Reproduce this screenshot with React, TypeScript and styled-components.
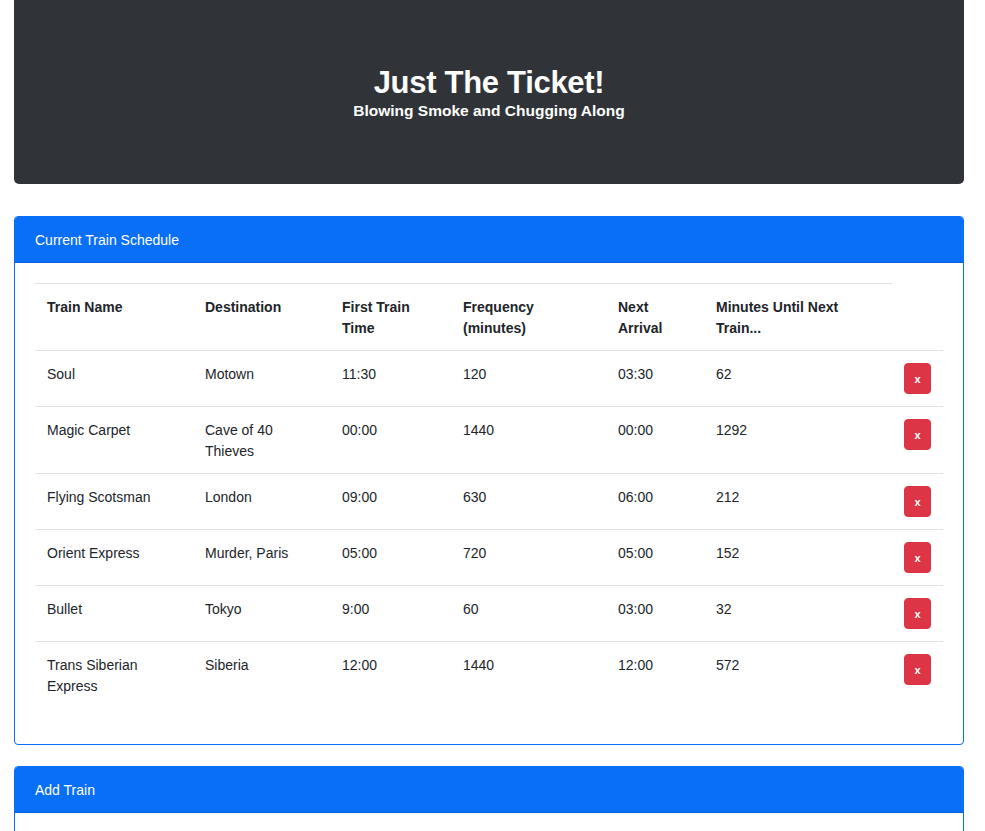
import styled, {createGlobalStyle} from "styled-components";

const GlobalStyle = createGlobalStyle`
  body {
    margin: 0;
    background: #ffffff;
    font-family: "Liberation Sans", Arial, sans-serif;
    font-size: 14px;
    line-height: 1.5;
    color: #212529;
  }
`;

const Page = styled.div`
  padding: 0 21px 40px 14px;
`;

const Jumbotron = styled.header`
  height: 184px;
  background-color: #303438;
  border-radius: 0 0 5px 5px;
  color: #ffffff;
  display: flex;
  flex-direction: column;
  justify-content: center;
  align-items: center;
`;

const Title = styled.h1`
  margin: 0;
  font-size: 31px;
  font-weight: 700;
  line-height: 37px;
  letter-spacing: -0.3px;
`;

const Subtitle = styled.h5`
  margin: 0;
  font-size: 15.5px;
  font-weight: 700;
  line-height: 19px;
`;

const Card = styled.section<{ $gap: number }>`
  margin-top: ${(p) => p.$gap}px;
  border: 1px solid #0a6ff7;
  border-radius: 4px;
  overflow: hidden;
`;

const CardHeader = styled.div`
  background-color: #0a6ff7;
  color: #ffffff;
  padding: 13px 20px 11px;
  line-height: 21px;
  border-bottom: 1px solid rgba(0, 0, 0, 0.125);
`;

const CardBody = styled.div`
  padding: 20px;
`;

const Table = styled.table`
  width: 100%;
  border-collapse: collapse;
  table-layout: fixed;
  margin-bottom: 16px;
`;

const Col = styled.col<{ $w: number }>`
  width: ${(p) => p.$w}px;
`;

const Th = styled.th`
  text-align: left;
  vertical-align: top;
  padding: 13px 12px 11px;
  font-weight: 700;
  line-height: 21px;
  border-top: 1px solid #dee2e6;
`;

const Td = styled.td`
  vertical-align: top;
  padding: 13px 12px 11px;
  line-height: 21px;
  border-top: 1px solid #dee2e6;
`;

const ActionTd = styled(Td)`
  padding: 12px;
`;

const DeleteButton = styled.button`
  width: 27px;
  height: 31px;
  padding: 1px 0 0;
  border: 1px solid #dc3545;
  border-radius: 4px;
  background-color: #dc3545;
  color: #ffffff;
  font-family: "Liberation Sans", Arial, sans-serif;
  font-size: 11px;
  font-weight: 700;
  line-height: 1;
  cursor: pointer;
`;

const Form = styled.form`
  display: flex;
  flex-direction: column;
  gap: 16px;
  padding-top: 4px;
`;

const Input = styled.input`
  height: 38px;
  padding: 6px 12px;
  border: 1px solid #ced4da;
  border-radius: 4px;
  font-size: 14px;
`;

const trains = [
    {name: "Soul", dest: "Motown", first: "11:30", freq: 120, next: "03:30", mins: 62},
    {name: "Magic Carpet", dest: "Cave of 40 Thieves", first: "00:00", freq: 1440, next: "00:00", mins: 1292},
    {name: "Flying Scotsman", dest: "London", first: "09:00", freq: 630, next: "06:00", mins: 212},
    {name: "Orient Express", dest: "Murder, Paris", first: "05:00", freq: 720, next: "05:00", mins: 152},
    {name: "Bullet", dest: "Tokyo", first: "9:00", freq: 60, next: "03:00", mins: 32},
    {name: "Trans Siberian Express", dest: "Siberia", first: "12:00", freq: 1440, next: "12:00", mins: 572},
];

const widths = [158, 137, 121, 155, 98, 188, 51];

function App() {
    return (
        <Page>
            <GlobalStyle/>
            <Jumbotron>
                <Title>Just The Ticket!</Title>
                <Subtitle>Blowing Smoke and Chugging Along</Subtitle>
            </Jumbotron>

            <Card $gap={32}>
                <CardHeader>Current Train Schedule</CardHeader>
                <CardBody>
                    <Table>
                        <colgroup>
                            {widths.map((w, i) => <Col key={i} $w={w}/>)}
                        </colgroup>
                        <thead>
                        <tr>
                            <Th>Train Name</Th>
                            <Th>Destination</Th>
                            <Th>First Train Time</Th>
                            <Th>Frequency (minutes)</Th>
                            <Th>Next Arrival</Th>
                            <Th>Minutes Until Next Train...</Th>
                        </tr>
                        </thead>
                        <tbody>
                        {trains.map((t) => (
                            <tr key={t.name}>
                                <Td>{t.name}</Td>
                                <Td>{t.dest}</Td>
                                <Td>{t.first}</Td>
                                <Td>{t.freq}</Td>
                                <Td>{t.next}</Td>
                                <Td>{t.mins}</Td>
                                <ActionTd><DeleteButton>x</DeleteButton></ActionTd>
                            </tr>
                        ))}
                        </tbody>
                    </Table>
                </CardBody>
            </Card>

            <Card $gap={21}>
                <CardHeader>Add Train</CardHeader>
                <CardBody>
                    <Form>
                        <Input aria-label="Train Name"/>
                        <Input aria-label="Destination"/>
                        <Input aria-label="First Train Time"/>
                        <Input aria-label="Frequency"/>
                    </Form>
                </CardBody>
            </Card>
        </Page>
    );
}

export default App;
